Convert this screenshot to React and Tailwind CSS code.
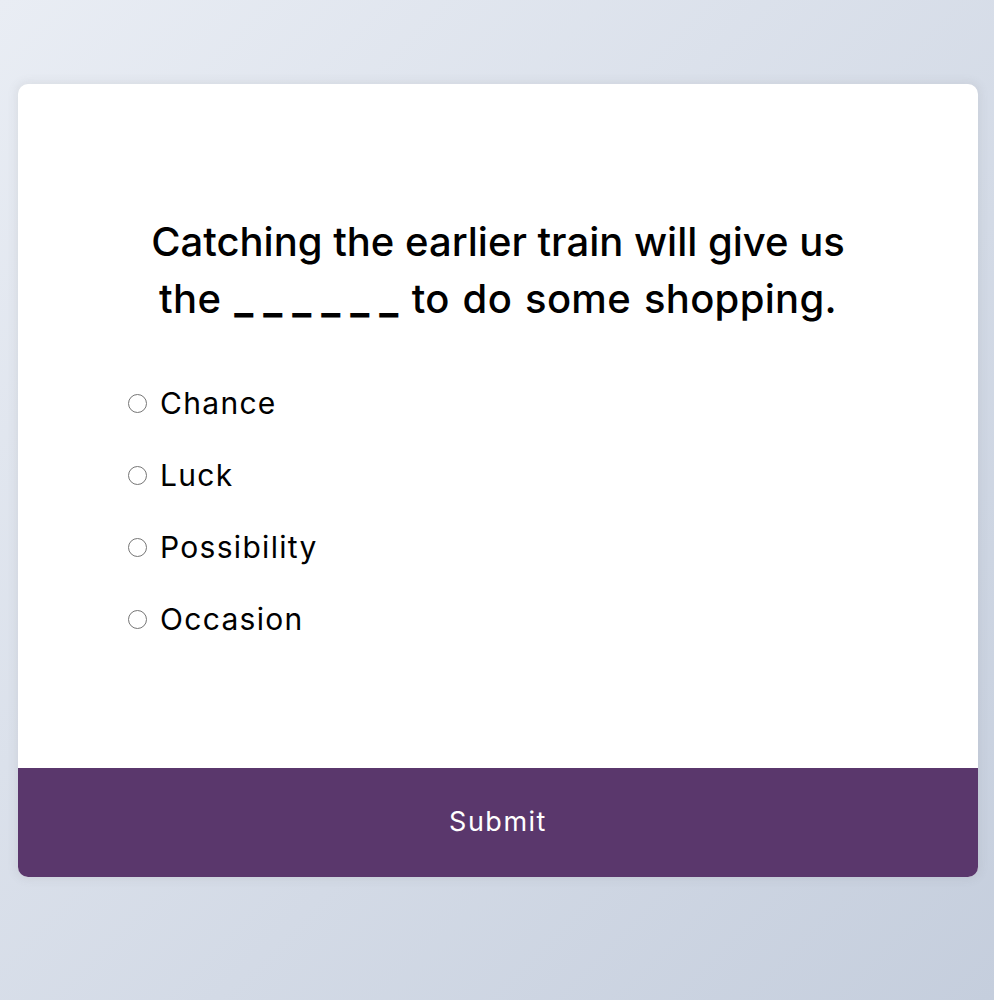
const OPTIONS = ['Chance', 'Luck', 'Possibility', 'Occasion']

export default function App() {
  return (
    <div
      className="min-h-screen w-full bg-linear-to-br from-[#e9edf4] to-[#c5cedd] pl-[18px] pt-[84px]"
      style={{ fontFamily: 'Inter, "Noto Sans", sans-serif' }}
    >
      <div className="w-[960px] rounded-[10px] bg-white overflow-hidden shadow-[0_0_10px_2px_rgba(100,100,100,0.1)]">
        {/* Question */}
        <div className="px-[110px] pt-[129px] pb-[129px]">
          <h2 className="text-center text-[40px] leading-[57px] font-medium text-black">
            Catching the earlier train will give us
            <br />
            <span className="tracking-[0.3px] [word-spacing:2px]">
              the <span className="font-bold"><span className="tracking-[10px]">_____</span>_</span> to do some shopping.
            </span>
          </h2>

          <ul className="mt-[56px] flex flex-col gap-[32px]">
            {OPTIONS.map((opt) => (
              <li key={opt} className="flex items-center h-[40px] gap-[13px]">
                <input
                  type="radio"
                  name="answer"
                  id={opt}
                  className="appearance-none w-[19px] h-[19px] rounded-full border-[1.5px] border-[#767676] bg-white shrink-0"
                />
                <label htmlFor={opt} className="text-[30px] tracking-[1.3px] font-normal text-black leading-[40px]">
                  {opt}
                </label>
              </li>
            ))}
          </ul>
        </div>

        {/* Submit */}
        <button className="w-full h-[109px] bg-[#5a376c] text-white text-[27px] tracking-[1.5px] flex items-center justify-center">
          Submit
        </button>
      </div>
    </div>
  )
}
